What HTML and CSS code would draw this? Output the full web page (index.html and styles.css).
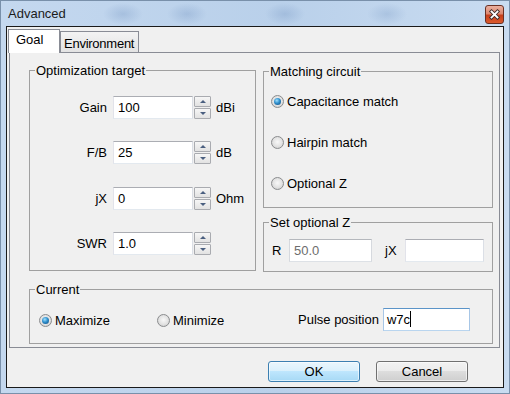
FILE: index.html
```html
<!DOCTYPE html>
<html>
<head>
  <title>Advanced</title>
  <link rel="stylesheet" href="styles.css">
</head>
<body>
<div class="window">

  <div class="titlebar">
    <span class="caption">Advanced</span>
    <span class="close">
      <svg width="17" height="17" viewBox="0 0 17 17">
        <path d="M5.5 5.5 L11.5 11.5 M11.5 5.5 L5.5 11.5" stroke="#3a2a28" stroke-width="3.6" stroke-linecap="square"/>
        <path d="M5.5 5.5 L11.5 11.5 M11.5 5.5 L5.5 11.5" stroke="#fff" stroke-width="1.8" stroke-linecap="square"/>
      </svg>
    </span>
  </div>

  <div class="client">
    <div class="tabs">
      <span class="tab selected">Goal</span>
      <span class="tab env">Environment</span>
    </div>

    <div class="panel">
      <div class="group target">
        <span class="legend">Optimization target</span>
        <div class="field">
          <span class="label">Gain</span>
          <span class="edit">100</span>
          <span class="spin"><span class="up"></span><span class="down"></span></span>
          <span class="unit">dBi</span>
        </div>
        <div class="field">
          <span class="label">F/B</span>
          <span class="edit">25</span>
          <span class="spin"><span class="up"></span><span class="down"></span></span>
          <span class="unit">dB</span>
        </div>
        <div class="field">
          <span class="label">jX</span>
          <span class="edit">0</span>
          <span class="spin"><span class="up"></span><span class="down"></span></span>
          <span class="unit">Ohm</span>
        </div>
        <div class="field">
          <span class="label">SWR</span>
          <span class="edit">1.0</span>
          <span class="spin"><span class="up"></span><span class="down"></span></span>
        </div>
      </div>

      <div class="side">
        <div class="group matching">
          <span class="legend">Matching circuit</span>
          <div class="option"><span class="radio on"></span>Capacitance match</div>
          <div class="option"><span class="radio"></span>Hairpin match</div>
          <div class="option"><span class="radio"></span>Optional Z</div>
        </div>

        <div class="group optz">
          <span class="legend">Set optional Z</span>
          <div class="zrow">
            <span class="zlabel">R</span>
            <span class="edit disabled r">50.0</span>
            <span class="zlabel jx">jX</span>
            <span class="edit x"></span>
          </div>
        </div>
      </div>

      <div class="group current">
        <span class="legend">Current</span>
        <div class="crow">
          <div class="option max"><span class="radio on"></span>Maximize</div>
          <div class="option min"><span class="radio"></span>Minimize</div>
          <span class="pulse">Pulse position</span>
          <span class="edit focus">w7c<span class="caret"></span></span>
        </div>
      </div>
    </div>

    <div class="buttons">
      <span class="button default">OK</span>
      <span class="button">Cancel</span>
    </div>
  </div>

</div>
</body>
</html>
```

FILE: styles.css
```css
* {
  box-sizing: border-box;
}

body {
  margin: 0;
  font-family: "Liberation Sans", Arial, sans-serif;
  font-size: 13px;
  line-height: 15px;
  color: #000;
  background: #bcd3ec;
}

.window {
  width: 510px;
  height: 394px;
  border: 1px solid #7990aa;
  background:
    radial-gradient(20px 11px at 122px 13px, rgba(120, 152, 196, .35), rgba(120, 152, 196, 0)),
    radial-gradient(20px 11px at 186px 13px, rgba(120, 152, 196, .35), rgba(120, 152, 196, 0)),
    radial-gradient(20px 11px at 284px 13px, rgba(120, 152, 196, .35), rgba(120, 152, 196, 0)),
    radial-gradient(20px 11px at 386px 13px, rgba(120, 152, 196, .3), rgba(120, 152, 196, 0)),
    linear-gradient(90deg, #c4d8ef, #b9d0ea 55%, #c9dcf1);
}

/* title bar */

.titlebar {
  height: 25px;
  display: flex;
  justify-content: space-between;
  align-items: flex-start;
  padding: 0 5px 0 7px;
}

.caption {
  margin-top: 5px;
  color: #1b1b1b;
}

.close {
  width: 19px;
  height: 19px;
  margin-top: 4px;
  border: 1px solid #6a3024;
  border-radius: 3px;
  background: linear-gradient(#eab0a0, #dc8870 45%, #c63f1c 55%, #dc5a2c);
  display: flex;
  align-items: center;
  justify-content: center;
}

/* client area */

.client {
  margin: 0 5px;
  height: 362px;
  border: 1px solid #1a1a1a;
  background: #f0f0f0;
}

.tabs {
  display: flex;
  align-items: flex-end;
  height: 24px;
  margin: 2px 0 0 1px;
  position: relative;
  z-index: 1;
}

.tab {
  height: 21px;
  margin-bottom: 1px;
  padding: 4px 0 0 3px;
  border: 1px solid #898c95;
  border-bottom: none;
  background: linear-gradient(#f3f3f3, #e3e3e3);
  white-space: nowrap;
  overflow: hidden;
}

.tab.env {
  width: 79px;
  letter-spacing: -0.25px;
}

.tab.selected {
  width: 52px;
  height: 24px;
  margin-bottom: 0;
  padding: 2px 0 0 7px;
  background: #fff;
}

.panel {
  margin: -1px 0 0 2px;
  width: 491px;
  height: 296px;
  border: 1px solid #898c95;
  padding: 17px 0 0 19px;
  display: grid;
  grid-template-columns: 227px 230px;
  column-gap: 7px;
  row-gap: 13px;
  align-items: start;
}

/* group boxes */

.group {
  position: relative;
  border: 1px solid #a0a0a0;
}

.legend {
  position: absolute;
  top: -8px;
  left: 5px;
  padding: 0 1px;
  background: #f0f0f0;
}

.target {
  height: 201px;
  padding-top: 25px;
  display: flex;
  flex-direction: column;
  gap: 22px;
}

.field {
  display: flex;
  align-items: center;
  height: 23px;
}

.field:nth-child(4) {
  margin-top: 1px;
}

.label {
  width: 77px;
  margin-right: 6px;
  text-align: right;
}

.edit {
  display: flex;
  align-items: center;
  width: 80px;
  height: 23px;
  padding-left: 4px;
  border: 1px solid;
  border-color: #abadb3 #dbdfe6 #e3e9ef #e2e3ea;
  background: #fff;
}

.spin {
  display: flex;
  flex-direction: column;
  gap: 1px;
  width: 17px;
  height: 23px;
  margin-left: 1px;
}

.spin span {
  flex: 1;
  border: 1px solid #a9abb0;
  border-radius: 1px;
  background: linear-gradient(#f6f6f6, #e2e2e2);
  display: flex;
  align-items: center;
  justify-content: center;
}

.spin .up::after,
.spin .down::after {
  content: "";
  border-left: 3px solid transparent;
  border-right: 3px solid transparent;
}

.spin .up::after {
  border-bottom: 3px solid #4a5f80;
}

.spin .down::after {
  border-top: 3px solid #4a5f80;
}

.unit {
  margin-left: 5px;
}

.side {
  display: flex;
  flex-direction: column;
  gap: 14px;
}

.matching {
  height: 137px;
  margin-top: 1px;
  padding: 22px 0 0 7px;
  display: flex;
  flex-direction: column;
  gap: 26px;
}

.option {
  display: flex;
  align-items: center;
  gap: 3px;
}

.radio {
  position: relative;
  width: 13px;
  height: 13px;
  border: 1px solid #8a8c8e;
  border-radius: 50%;
  background: radial-gradient(circle at 50% 45%, #f8f8f8, #e2e2e2 55%, #c4c4c4);
}

.radio.on::after {
  content: "";
  position: absolute;
  left: 2px;
  top: 2px;
  width: 7px;
  height: 7px;
  border-radius: 50%;
  background: radial-gradient(circle at 40% 35%, #9fe0ff, #2f8fcc 45%, #0e4478);
}

.optz {
  height: 50px;
  padding: 16px 0 0 8px;
}

.zrow {
  display: flex;
  align-items: center;
}

.zlabel {
  width: 17px;
}

.zlabel.jx {
  width: 20px;
  margin-left: 13px;
}

.edit.r {
  width: 83px;
}

.edit.x {
  width: 79px;
}

.edit.disabled {
  color: #6d6d6d;
  border-color: #b5b8bd #d6d9de #dde1e6 #d6d9de;
}

.current {
  grid-column: 1 / 3;
  height: 55px;
  padding: 18px 0 0 9px;
}

.crow {
  display: flex;
  align-items: center;
  height: 23px;
}

.crow .option {
  margin-top: 3px;
}

.max {
  width: 118px;
}

.min {
  width: 141px;
}

.pulse {
  margin: 1px 4px 0 0;
}

.edit.focus {
  width: 87px;
  padding-left: 3px;
  border-color: #5b94c8 #a7c6e6 #b9d5ef #a7c6e6;
}

.caret {
  display: inline-block;
  width: 1px;
  height: 16px;
  background: #000;
}

/* buttons */

.buttons {
  display: flex;
  justify-content: flex-end;
  gap: 16px;
  margin-top: 13px;
  padding-right: 35px;
}

.button {
  width: 92px;
  height: 21px;
  border: 1px solid #707070;
  border-radius: 3px;
  text-align: center;
  line-height: 19px;
  box-shadow: inset 0 0 0 1px rgba(255, 255, 255, .6);
  background: linear-gradient(#f2f2f2, #ebebeb 50%, #dddddd 50%, #cfcfcf);
}

.button.default {
  border-color: #3c7fb1;
  background: linear-gradient(#eaf6fd, #d9f0fc 50%, #bee6fd 50%, #a7d9f5);
}
```
